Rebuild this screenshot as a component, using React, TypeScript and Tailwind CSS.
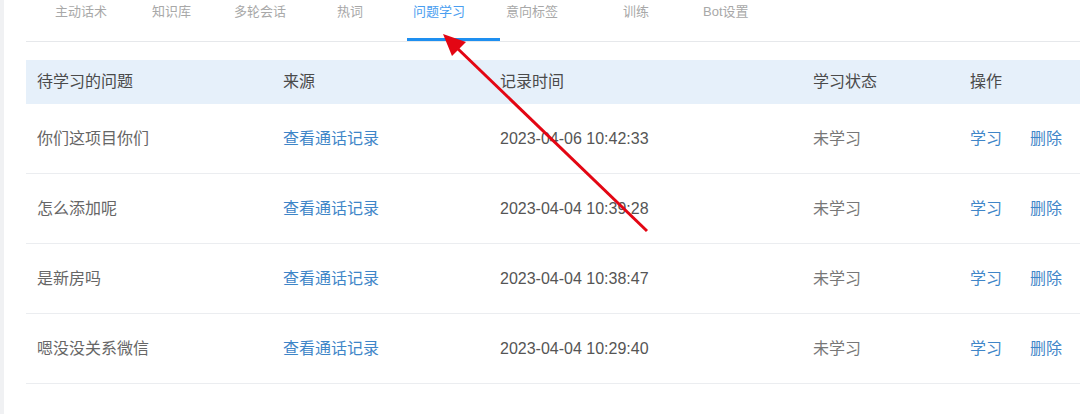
import { clsx as cn } from 'clsx'

type Question = {
  text: string
  time: string
  status: string
}

const TABS = [
  { label: '主动话术', className: 'ml-[29px]' },
  { label: '知识库', className: 'ml-[45px]' },
  { label: '多轮会话', className: 'ml-[43px]' },
  { label: '热词', className: 'ml-[51px]' },
  { label: '问题学习', className: 'ml-[50px]', active: true },
  { label: '意向标签', className: 'ml-[41px]' },
  { label: '训练', className: 'ml-[65px]' },
  { label: 'Bot设置', className: 'ml-[54px]' },
]

const QUESTIONS: Question[] = [
  { text: '你们这项目你们', time: '2023-04-06 10:42:33', status: '未学习' },
  { text: '怎么添加呢', time: '2023-04-04 10:39:28', status: '未学习' },
  { text: '是新房吗', time: '2023-04-04 10:38:47', status: '未学习' },
  { text: '嗯没没关系微信', time: '2023-04-04 10:29:40', status: '未学习' },
]

const GRID = 'grid grid-cols-[246px_217px_313px_157px_1fr]'

export default function App() {
  return (
    <div
      className="relative flex h-[414px] w-[1080px] overflow-hidden bg-white"
      style={{ fontFamily: '"Liberation Sans", "Noto Sans CJK SC", sans-serif' }}
    >
      <div className="w-[4px] shrink-0 bg-[#f0f1f3]" />

      <div className="flex-1 pl-[22px]">
        {/* tabs */}
        <div className="relative flex h-[42px] border-b border-[#e6e8eb]">
          {TABS.map((tab) => (
            <div
              key={tab.label}
              className={cn(
                'pt-[2px] text-[13px] leading-[20px]',
                tab.className,
                tab.active ? 'text-[#4a9ef0]' : 'text-[#a8a8a8]',
              )}
            >
              {tab.label}
            </div>
          ))}
          <div className="absolute bottom-0 left-[381px] h-[3px] w-[93px] bg-[#1e8ff0]" />
        </div>

        {/* table */}
        <div className="mt-[18px] text-[16px]">
          <div className={cn(GRID, 'h-[44px] items-center bg-[#e6f0fa] text-[#4a4a4a]')}>
            <div className="pl-[11px]">待学习的问题</div>
            <div className="pl-[11px]">来源</div>
            <div className="pl-[11px]">记录时间</div>
            <div className="pl-[11px]">学习状态</div>
            <div className="pl-[11px]">操作</div>
          </div>

          {QUESTIONS.map((q) => (
            <div
              key={q.time}
              className={cn(GRID, 'h-[70px] items-center border-b border-[#ebedf0] pt-[1px]')}
            >
              <div className="pl-[11px] text-[#666]">{q.text}</div>
              <div className="pl-[11px] text-[#3f86c8]">查看通话记录</div>
              <div className="pl-[11px] text-[#555]">{q.time}</div>
              <div className="pl-[11px] text-[#777]">{q.status}</div>
              <div className="flex gap-[28px] pl-[11px] text-[#3f86c8]">
                <span>学习</span>
                <span>删除</span>
              </div>
            </div>
          ))}
        </div>
      </div>

      {/* red annotation arrow */}
      <svg
        className="pointer-events-none absolute left-0 top-0"
        width="1080"
        height="414"
        viewBox="0 0 1080 414"
      >
        <line x1="647" y1="231" x2="456" y2="47" stroke="#e30613" strokeWidth="3" />
        <polygon points="443,34 452,56 466,42" fill="#e30613" />
      </svg>
    </div>
  )
}
